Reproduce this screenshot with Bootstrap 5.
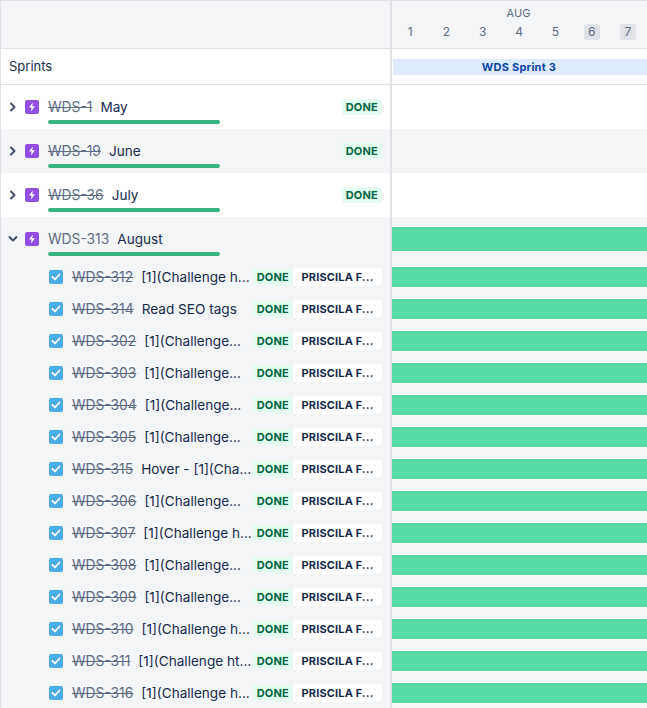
<!DOCTYPE html>
<html lang="en">
<head>
  <meta charset="UTF-8" />
  <title>Timeline</title>
  <link href="https://cdn.jsdelivr.net/npm/bootstrap@5.3.3/dist/css/bootstrap.min.css" rel="stylesheet">
  <style>
    html, body { height: 708px; overflow: hidden; }
    body { font-family: Inter, "Liberation Sans", sans-serif; font-size: 14px; color: #172b4d; background: #fff; }
    .tl-row { display: flex; border-left: 1px solid #dfe1e6; }
    .tl-left { width: 391px; flex: none; border-right: 2px solid #dfe1e6; display: flex; align-items: center; min-width: 0; }
    .tl-right { flex: 1; min-width: 0; display: flex; align-items: center; }
    .tl-gray { background: #f4f5f7; }
    .tl-head { height: 49px; border-top: 1px solid #dfe1e6; border-bottom: 1px solid #dfe1e6; }
    .tl-cal { flex-direction: column; align-items: stretch; color: #5e6c84; font-size: 12px; }
    .tl-month { text-align: center; line-height: 16px; margin-top: 4px; height: 19px; font-size: 11px; padding-right: 2px; }
    .tl-days { display: flex; }
    .tl-day { width: 36.3px; flex: none; display: flex; justify-content: center; }
    .tl-day span { width: 16px; height: 16px; line-height: 16px; text-align: center; border-radius: 3px; }
    .tl-day .tl-wknd { background: #dfe1e6; }
    .tl-sprints { height: 36px; border-bottom: 1px solid #dfe1e6; }
    .tl-sprints .tl-left { padding-left: 8px; font-size: 13px; }
    .tl-sprint-bar { flex: 1; margin-left: 1px; height: 16px; line-height: 16px; background: #deebff; color: #0747a6; font-size: 11px; font-weight: 700; text-align: center; letter-spacing: .25px; padding-right: 2px; }
    .tl-epic { height: 44px; }
    .tl-epic .tl-left { align-items: flex-start; padding-top: 13px; position: relative; }
    .tl-chev { width: 24px; height: 14px; margin-top: 2px; flex: none; display: flex; align-items: center; justify-content: center; }
    .tl-type { width: 14px; height: 14px; margin-top: 2px; border-radius: 2px; background: #904ee2; flex: none; display: flex; align-items: center; justify-content: center; }
    .tl-key { color: #5e6c84; font-size: 13.8px; margin-left: 9px; white-space: nowrap; line-height: 18px; }
    .tl-key-done { text-decoration: line-through; }
    .tl-title { margin-left: 8px; font-size: 13.6px; line-height: 18px; white-space: nowrap; overflow: hidden; text-overflow: ellipsis; min-width: 0; flex: 1; }
    .tl-done { background: #e3fcef; color: #006644; font-size: 11px; font-weight: 700; line-height: 16px; height: 16px; padding: 0 4px; border-radius: 3px; letter-spacing: .2px; flex: none; }
    .tl-epic .tl-done { margin: 1px 8px 0 0; }
    .tl-progress { position: absolute; left: 47px; top: 35px; width: 172px; height: 4px; border-radius: 2px; background: #36b37e; }
    .tl-child { height: 32px; }
    .tl-child .tl-left { padding-left: 48px; padding-right: 8px; }
    .tl-check { width: 14px; height: 14px; flex: none; border-radius: 2px; background: #4bade8; display: flex; align-items: center; justify-content: center; }
    .tl-child .tl-key { margin-left: 9px; }
    .tl-child .tl-title { margin-left: 8px; }
    .tl-person { background: #fff; color: #172b4d; font-size: 11px; font-weight: 700; line-height: 19px; height: 18px; width: 89px; text-align: center; border-radius: 3px; letter-spacing: .15px; flex: none; white-space: nowrap; }
    .tl-bar { flex: 1; background: #57d9a3; height: 20px; }
    .tl-bar-big { height: 24px; }
  </style>
</head>
<body>
  <div id="chart"></div>
  <script>
    const epics = [
      { key: 'WDS-1', title: 'May' },
      { key: 'WDS-19', title: 'June' },
      { key: 'WDS-36', title: 'July' }
    ];
    const children = [
      ['WDS-312', '[1](Challenge h...'], ['WDS-314', 'Read SEO tags'], ['WDS-302', '[1](Challenge...'],
      ['WDS-303', '[1](Challenge...'], ['WDS-304', '[1](Challenge...'], ['WDS-305', '[1](Challenge...'],
      ['WDS-315', 'Hover - [1](Cha...'], ['WDS-306', '[1](Challenge...'], ['WDS-307', '[1](Challenge h...'],
      ['WDS-308', '[1](Challenge...'], ['WDS-309', '[1](Challenge...'], ['WDS-310', '[1](Challenge h...'],
      ['WDS-311', '[1](Challenge ht...'], ['WDS-316', '[1](Challenge h...']
    ];
    const chevRight = '<svg width="8" height="10" viewBox="0 0 8 10"><path d="M2 1.5 5.5 5 2 8.5" fill="none" stroke="#42526e" stroke-width="2" stroke-linecap="round" stroke-linejoin="round"/></svg>';
    const chevDown = '<svg width="10" height="8" viewBox="0 0 10 8"><path d="M1.5 2 5 5.5 8.5 2" fill="none" stroke="#42526e" stroke-width="2" stroke-linecap="round" stroke-linejoin="round"/></svg>';
    const bolt = '<svg width="8" height="10" viewBox="0 0 8 10"><path d="M4.8 0.5 1 5.6h2.6L3 9.5 7 4.2H4.3z" fill="#fff"/></svg>';
    const tick = '<svg width="10" height="8" viewBox="0 0 10 8"><path d="M1.5 4 4 6.3 8.5 1.5" fill="none" stroke="#fff" stroke-width="1.8" stroke-linecap="round" stroke-linejoin="round"/></svg>';

    const days = [1, 2, 3, 4, 5, 6, 7].map(d =>
      `<div class="tl-day"><span class="${d > 5 ? 'tl-wknd' : ''}">${d}</span></div>`).join('');

    let html = `
      <div class="tl-row tl-head tl-gray">
        <div class="tl-left"></div>
        <div class="tl-right tl-cal">
          <div class="tl-month">AUG</div>
          <div class="tl-days">${days}</div>
        </div>
      </div>
      <div class="tl-row tl-sprints">
        <div class="tl-left">Sprints</div>
        <div class="tl-right"><div class="tl-sprint-bar">WDS Sprint 3</div></div>
      </div>`;

    epics.forEach((e, i) => {
      html += `
      <div class="tl-row tl-epic ${i % 2 ? 'tl-gray' : ''}">
        <div class="tl-left">
          <div class="tl-chev">${chevRight}</div>
          <div class="tl-type">${bolt}</div>
          <span class="tl-key tl-key-done">${e.key}</span>
          <span class="tl-title">${e.title}</span>
          <span class="tl-done">DONE</span>
          <div class="tl-progress"></div>
        </div>
        <div class="tl-right"></div>
      </div>`;
    });

    html += `
      <div class="tl-row tl-epic tl-gray">
        <div class="tl-left">
          <div class="tl-chev">${chevDown}</div>
          <div class="tl-type">${bolt}</div>
          <span class="tl-key">WDS-313</span>
          <span class="tl-title">August</span>
          <div class="tl-progress"></div>
        </div>
        <div class="tl-right"><div class="tl-bar tl-bar-big"></div></div>
      </div>`;

    children.forEach(c => {
      html += `
      <div class="tl-row tl-child tl-gray">
        <div class="tl-left">
          <div class="tl-check">${tick}</div>
          <span class="tl-key tl-key-done">${c[0]}</span>
          <span class="tl-title">${c[1]}</span>
          <span class="tl-done">DONE</span>
          <span class="tl-person">PRISCILA F...</span>
        </div>
        <div class="tl-right"><div class="tl-bar"></div></div>
      </div>`;
    });

    document.getElementById('chart').innerHTML = html;
  </script>
  <script src="https://cdn.jsdelivr.net/npm/bootstrap@5.3.3/dist/js/bootstrap.bundle.min.js"></script>
</body>
</html>
